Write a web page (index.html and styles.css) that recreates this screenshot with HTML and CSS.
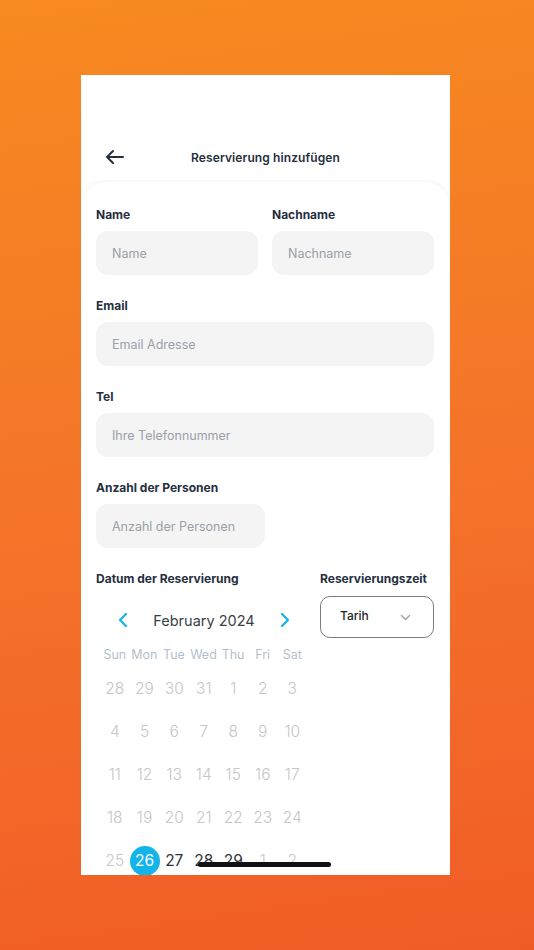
FILE: index.html
```html
<!DOCTYPE html>
<html lang="de">
<head>
<meta charset="utf-8">
<title>Reservierung hinzufügen</title>
<link rel="stylesheet" href="styles.css">
</head>
<body>
<div class="screen">
  <div class="status"></div>
  <header class="topbar">
    <button class="back" aria-label="Zurück">
      <svg width="20" height="16" viewBox="0 0 20 16" fill="none" stroke="#252f3f" stroke-width="2" stroke-linecap="round" stroke-linejoin="round"><path d="M18 8H2M8 2L2 8l6 6"/></svg>
    </button>
    <h1 class="title">Reservierung hinzufügen</h1>
  </header>
  <main class="card">
    <div class="row two">
      <div class="field">
        <label class="label">Name</label>
        <div class="input">Name</div>
      </div>
      <div class="field">
        <label class="label">Nachname</label>
        <div class="input">Nachname</div>
      </div>
    </div>
    <div class="field">
      <label class="label">Email</label>
      <div class="input">Email Adresse</div>
    </div>
    <div class="field">
      <label class="label">Tel</label>
      <div class="input">Ihre Telefonnummer</div>
    </div>
    <div class="field">
      <label class="label">Anzahl der Personen</label>
      <div class="input short">Anzahl der Personen</div>
    </div>
    <div class="date-row">
      <div class="date-col">
        <label class="label">Datum der Reservierung</label>
        <div class="calendar">
          <div class="cal-head">
            <svg class="chev" width="10" height="16" viewBox="0 0 10 16" fill="none" stroke="#12b4e9" stroke-width="2.2" stroke-linecap="round" stroke-linejoin="round"><path d="M8 2L2 8l6 6"/></svg>
            <span class="month">February 2024</span>
            <svg class="chev" width="10" height="16" viewBox="0 0 10 16" fill="none" stroke="#12b4e9" stroke-width="2.2" stroke-linecap="round" stroke-linejoin="round"><path d="M2 2l6 6-6 6"/></svg>
          </div>
          <div class="weekdays">
            <span>Sun</span><span>Mon</span><span>Tue</span><span>Wed</span><span>Thu</span><span>Fri</span><span>Sat</span>
          </div>
          <div class="days">
            <span>28</span><span>29</span><span>30</span><span>31</span><span>1</span><span>2</span><span>3</span>
            <span>4</span><span>5</span><span>6</span><span>7</span><span>8</span><span>9</span><span>10</span>
            <span>11</span><span>12</span><span>13</span><span>14</span><span>15</span><span>16</span><span>17</span>
            <span>18</span><span>19</span><span>20</span><span>21</span><span>22</span><span>23</span><span>24</span>
            <span>25</span><span class="sel"><i>26</i></span><span class="on">27</span><span class="on">28</span><span class="on">29</span><span>1</span><span>2</span>
          </div>
        </div>
      </div>
      <div class="time-col">
        <label class="label">Reservierungszeit</label>
        <div class="select">
          <span>Tarih</span>
          <svg width="11" height="7" viewBox="0 0 11 7" fill="none" stroke="#a3a3a3" stroke-width="1.5" stroke-linecap="round" stroke-linejoin="round"><path d="M1.5 1.5l4 4 4-4"/></svg>
        </div>
      </div>
    </div>
  </main>
  <div class="home-indicator"></div>
</div>
</body>
</html>
```

FILE: styles.css
```css
html, body {
  margin: 0;
  padding: 0;
}
body {
  width: 534px;
  height: 950px;
  overflow: hidden;
  background: linear-gradient(172deg, #f78a20 0%, #f4722a 55%, #f15c26 100%);
  font-family: Inter, "Noto Sans", sans-serif;
}
.screen {
  position: relative;
  width: 369px;
  height: 800px;
  margin: 75px 0 0 81px;
  background: #fff;
  overflow: hidden;
}
.status {
  height: 60px;
}
.topbar {
  position: relative;
  height: 44px;
  display: flex;
  align-items: center;
  justify-content: center;
}
.back {
  position: absolute;
  left: 24px;
  top: 14px;
  padding: 0;
  border: 0;
  background: none;
  display: flex;
}
.title {
  margin: 0;
  font-size: 12px;
  font-weight: 600;
  color: #252f3f;
  letter-spacing: 0.1px;
}
.card {
  margin-top: 3px;
  padding: 25px 16px 0 15px;
  border-radius: 24px 24px 0 0;
  box-shadow: 0 -1px 3px rgba(0, 0, 0, 0.06);
  display: flex;
  flex-direction: column;
  gap: 23px;
}
.row.two {
  display: flex;
  gap: 14px;
}
.row.two .field {
  flex: 1;
}
.field {
  display: flex;
  flex-direction: column;
}
.label {
  display: block;
  font-size: 12px;
  font-weight: 700;
  line-height: 16px;
  color: #252f3f;
  margin-bottom: 8px;
}
.input {
  height: 44px;
  box-sizing: border-box;
  border-radius: 12px;
  background: #f4f4f5;
  padding: 0 16px;
  display: flex;
  align-items: center;
  font-size: 12.5px;
  color: #9aa0a8;
}
.input.short {
  width: 169px;
}
.date-row {
  display: flex;
  gap: 10px;
}
.date-col {
  width: 214px;
}
.time-col {
  flex: 1;
}
.time-col .label {
  margin-bottom: 9px;
}
.select {
  height: 42px;
  box-sizing: border-box;
  border: 1px solid #7d7d7d;
  border-radius: 10px;
  padding: 0 22px 0 19px;
  display: flex;
  align-items: center;
  justify-content: space-between;
  font-size: 12px;
  font-weight: 500;
  color: #1f1f1f;
}
.select span {
  margin-top: -4px;
}
.calendar {
  width: 207px;
  margin-left: 4px;
  font-family: Inter, "Noto Sans", sans-serif;
}
.cal-head {
  height: 32px;
  margin-top: 17px;
  padding: 0 17px 0 18px;
  display: flex;
  align-items: center;
  justify-content: space-between;
}
.month {
  font-size: 14.5px;
  color: #3a3f47;
}
.weekdays {
  margin-top: 8px;
  display: grid;
  grid-template-columns: repeat(7, 1fr);
  height: 20px;
  align-items: center;
  text-align: center;
  font-size: 12.5px;
  color: #b3bfcc;
}
.days {
  margin-top: 3px;
  display: grid;
  grid-template-columns: repeat(7, 1fr);
  grid-auto-rows: 43px;
  align-items: center;
  text-align: center;
  font-size: 15.5px;
  font-weight: 300;
  color: #c6c6c6;
}
.days .on {
  color: #2f343b;
  font-weight: 400;
}
.days .sel {
  display: flex;
  justify-content: center;
}
.days .sel i {
  font-style: normal;
  width: 30px;
  height: 30px;
  border-radius: 50%;
  background: #12b4e9;
  color: #fff;
  font-weight: 400;
  display: flex;
  align-items: center;
  justify-content: center;
}
.home-indicator {
  position: absolute;
  left: 117px;
  top: 787px;
  width: 133px;
  height: 5px;
  border-radius: 3px;
  background: #111;
}
```
